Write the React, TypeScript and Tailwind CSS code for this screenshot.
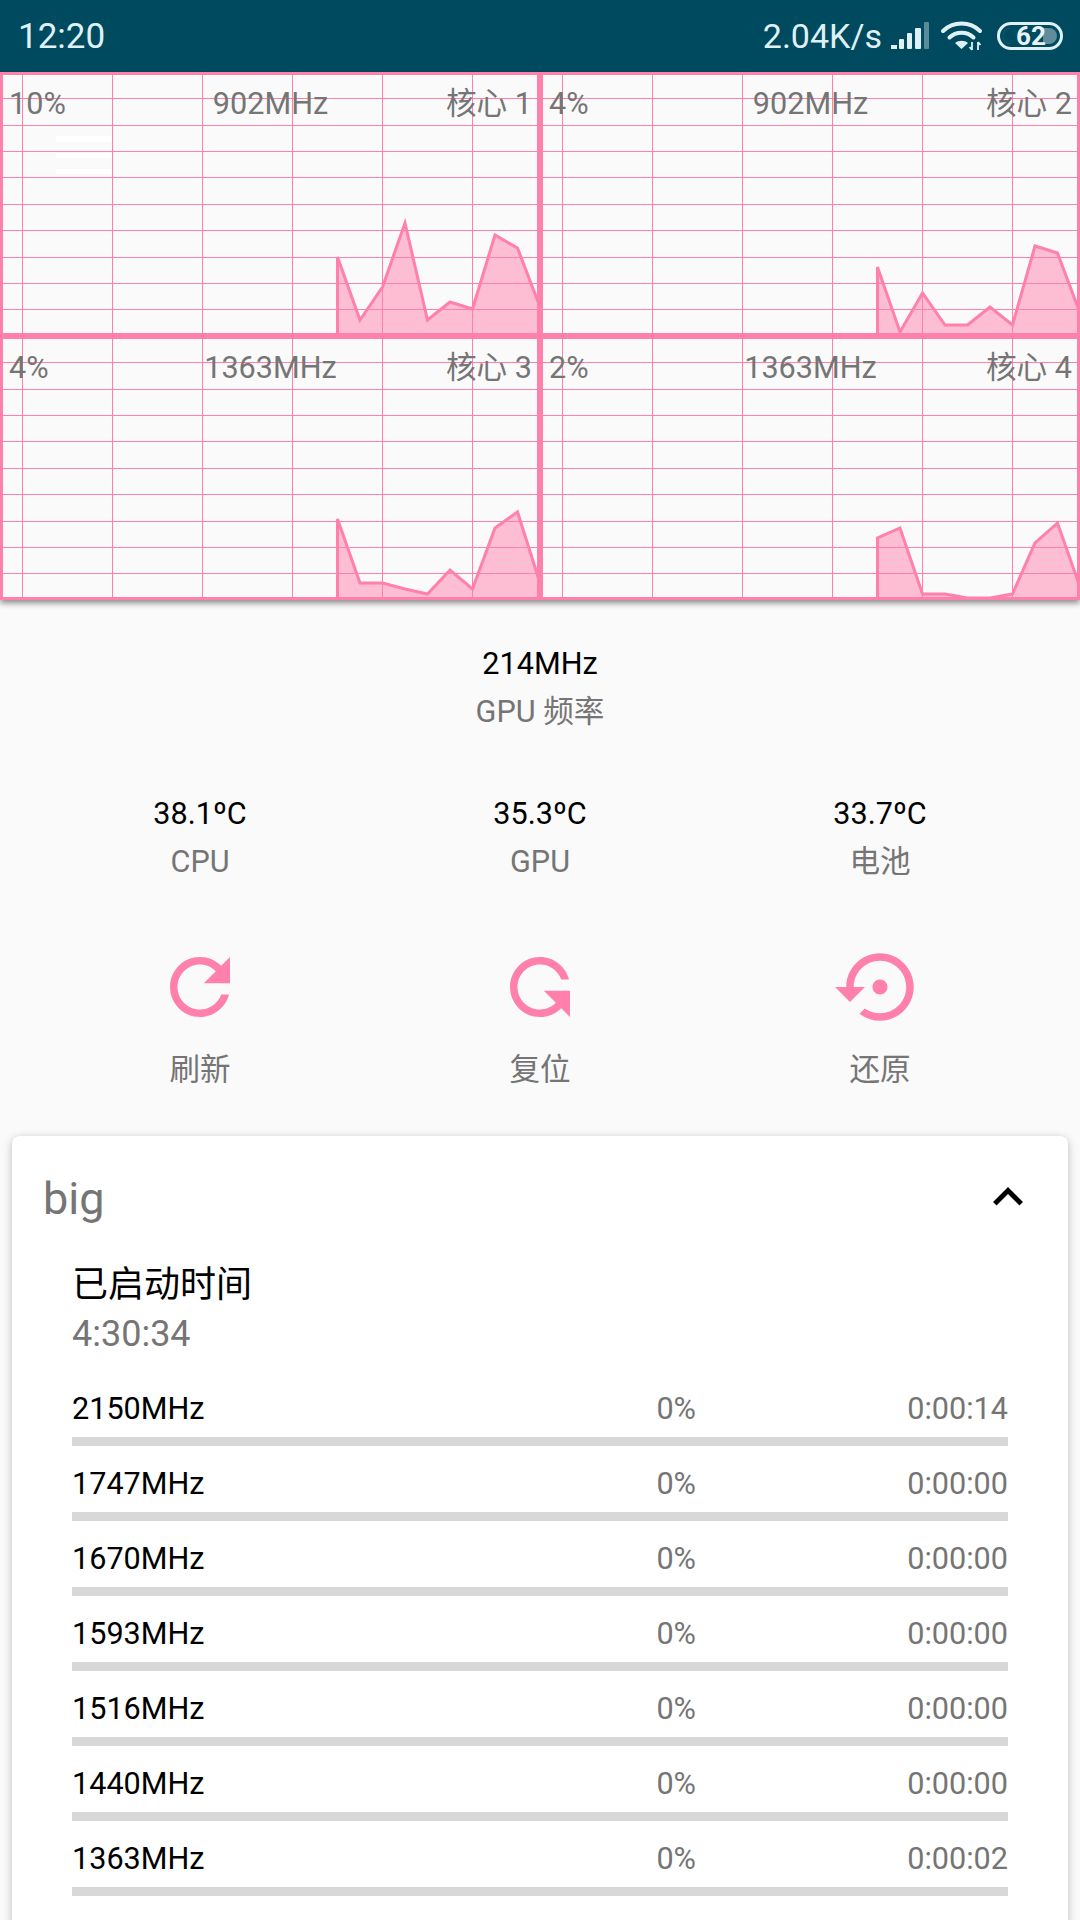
import { Fragment } from 'react';

const PINK = '#ff80ab';

// grid lines are the same in every core panel
const vLines = [22.5, 112.5, 202.5, 292.5, 382.5, 472.5];
const hLines = [26, 53, 79, 105, 132, 158, 185, 211, 237];

// load history, y values in panel coordinates (panel is 540x264)
const cores = [
  {
    load: '10%',
    freq: '902MHz',
    name: '核心 1',
    points: [185, 248, 215, 151, 248, 230, 237, 163, 176, 235],
  },
  {
    load: '4%',
    freq: '902MHz',
    name: '核心 2',
    points: [195, 260, 221, 253, 253, 235, 253, 174, 181, 241],
  },
  {
    load: '4%',
    freq: '1363MHz',
    name: '核心 3',
    points: [183, 247, 247, 253, 258, 234, 253, 192, 176, 247],
  },
  {
    load: '2%',
    freq: '1363MHz',
    name: '核心 4',
    points: [202, 192, 258, 258, 262, 262, 258, 207, 187, 251],
  },
];

const freqRows = [
  ['2150MHz', '0%', '0:00:14'],
  ['1747MHz', '0%', '0:00:00'],
  ['1670MHz', '0%', '0:00:00'],
  ['1593MHz', '0%', '0:00:00'],
  ['1516MHz', '0%', '0:00:00'],
  ['1440MHz', '0%', '0:00:00'],
  ['1363MHz', '0%', '0:00:02'],
];

const temps = [
  ['38.1ºC', 'CPU'],
  ['35.3ºC', 'GPU'],
  ['33.7ºC', '电池'],
];

const REFRESH =
  'M17.65 6.35C16.2 4.9 14.21 4 12 4c-4.42 0-7.99 3.58-7.99 8s3.57 8 7.99 8c3.73 0 6.84-2.55 7.73-6h-2.08c-.82 2.33-3.04 4-5.65 4-3.31 0-6-2.69-6-6s2.69-6 6-6c1.66 0 3.14.69 4.22 1.78L13 11h7V4l-2.35 2.35z';
const RESTORE =
  'M14 12c0-1.1-.9-2-2-2s-2 .9-2 2 .9 2 2 2 2-.9 2-2zm-2-9c-4.97 0-9 4.03-9 9H0l4 4 4-4H5c0-3.87 3.13-7 7-7s7 3.13 7 7-3.13 7-7 7c-1.51 0-2.91-.49-4.06-1.3l-1.42 1.44C8.04 20.3 9.94 21 12 21c4.97 0 9-4.03 9-9s-4.03-9-9-9z';

function StatusIcons() {
  return (
    <div className="flex items-center">
      <svg width="40" height="28" viewBox="0 0 40 28" className="ml-[8px]">
        <rect x="1" y="23" width="6" height="4" fill="#dff1f5" />
        <rect x="9" y="17" width="5" height="10" rx="1" fill="#dff1f5" />
        <rect x="17" y="11" width="5" height="16" rx="1" fill="#dff1f5" />
        <rect x="25" y="6" width="6" height="21" rx="1" fill="#dff1f5" />
        <rect x="34" y="0" width="5" height="27" rx="1" fill="#dff1f5" opacity="0.4" />
      </svg>
      <svg width="44" height="30" viewBox="0 0 44 30" className="ml-[10px]">
        <path d="M3 10C13 0 30 0 40 10" stroke="#dff1f5" strokeWidth="4" fill="none" strokeLinecap="round" />
        <path d="M9.500 16.500C16 10 27 10 33.500 16.500" stroke="#dff1f5" strokeWidth="4" fill="none" strokeLinecap="round" />
        <path d="M15 22C18.500 19 24.500 19 28 22L21.500 28z" fill="#dff1f5" />
        <path d="M32 21v8M32 29l-2.500-3M38 29v-8M38 21l2.500 3" stroke="#dff1f5" strokeWidth="1.800" fill="none" />
      </svg>
      <div className="relative ml-[13px] flex h-[28px] w-[66px] items-center rounded-full border-[3px] border-[#dff1f5]">
        <div className="absolute inset-y-[3px] left-[3px] right-[3px] rounded-full bg-[#5f8d9c]" />
        <div className="absolute inset-y-[3px] left-[3px] w-[40px] rounded-l-full bg-[#004a5f]" />
        <span className="relative ml-[16px] text-[26px] leading-none font-bold text-[#e6f4f7]">62</span>
      </div>
    </div>
  );
}

function CorePanel({ load, freq, name, points }: { load: string; freq: string; name: string; points: number[] }) {
  const coords = points.map((y, i) => `${337.5 + i * 22.5},${y}`).join(' ');
  return (
    <div className="relative h-[264px] w-[540px]">
      <svg width="540" height="264" viewBox="0 0 540 264" className="block">
        {hLines.map((y) => (
          <line key={y} x1="0" x2="540" y1={y + 0.5} y2={y + 0.5} stroke={PINK} strokeWidth="1" />
        ))}
        {vLines.map((x) => (
          <line key={x} x1={x} x2={x} y1="0" y2="264" stroke={PINK} strokeWidth="1" />
        ))}
        <polygon points={`337.5,264 ${coords} 540,264`} fill={PINK} fillOpacity="0.5" />
        <polyline points={`337.5,264 ${coords} 540,264`} fill="none" stroke={PINK} strokeWidth="3" />
        <rect x="0" y="0" width="540" height="264" fill="none" stroke={PINK} strokeWidth="6" />
      </svg>
      <div className="absolute inset-x-0 top-[12px] grid grid-cols-3 pr-[8px] pl-[9px] text-[30.6px] leading-[40px] text-[#757575]">
        <span>{load}</span>
        <span className="text-center">{freq}</span>
        <span className="text-right">{name}</span>
      </div>
    </div>
  );
}

function Stat({ value, label }: { value: string; label: string }) {
  return (
    <div className="flex flex-col items-center gap-[8px] text-[30.6px] leading-[40px]">
      <span className="text-black">{value}</span>
      <span className="text-[#757575]">{label}</span>
    </div>
  );
}

function Action({ path, label, flip }: { path: string; label: string; flip?: boolean }) {
  return (
    <div className="flex flex-col items-center gap-[18px]">
      <svg width="90" height="90" viewBox="0 0 24 24" fill={PINK} className={flip ? '-scale-y-100' : ''}>
        <path d={path} />
      </svg>
      <span className="text-[30.6px] leading-[40px] text-[#757575]">{label}</span>
    </div>
  );
}

export default function App() {
  return (
    <div className="h-[1920px] w-[1080px] overflow-hidden bg-[#fafafa] font-['Roboto','Noto_Sans_CJK_SC',sans-serif]">
      {/* status bar */}
      <div className="flex h-[72px] items-center justify-between bg-[#004a5f] pr-[17px] pl-[18px] text-[#dff1f5]">
        <span className="text-[35px] leading-none">12:20</span>
        <div className="flex items-center">
          <span className="text-[34px] leading-none">2.04K/s</span>
          <StatusIcons />
        </div>
      </div>

      {/* per-core charts */}
      <div className="relative grid h-[528px] grid-cols-2 bg-[#fafafa] shadow-[0_3px_6px_rgba(0,0,0,0.45)]">
        {cores.map((core) => (
          <Fragment key={core.name}>
            <CorePanel {...core} />
          </Fragment>
        ))}
        <div className="absolute top-[64px] left-[56px] flex w-[56px] flex-col gap-[11px]">
          <div className="h-[6px] bg-white" />
          <div className="h-[5px] bg-white" />
          <div className="h-[5px] bg-white" />
        </div>
      </div>

      <div className="pt-[44px]">
        <Stat value="214MHz" label="GPU 频率" />
      </div>

      <div className="mt-[62px] grid grid-cols-3 px-[30px]">
        {temps.map(([value, label]) => (
          <Stat key={label} value={value} label={label} />
        ))}
      </div>

      <div className="mt-[60px] grid grid-cols-3 px-[30px]">
        <Action path={REFRESH} label="刷新" />
        <Action path={REFRESH} label="复位" flip />
        <Action path={RESTORE} label="还原" />
      </div>

      {/* big cluster card */}
      <div className="mx-[12px] mt-[46px] rounded-[8px] bg-white pt-[33px] pb-[60px] shadow-[0_2px_8px_rgba(0,0,0,0.25)]">
        <div className="relative flex h-[60px] items-center pl-[31px]">
          <span className="text-[45px] leading-[60px] text-[#757575]">big</span>
          <svg width="60" height="60" viewBox="0 0 24 24" fill="#000" className="absolute top-[-2px] right-[30px]">
            <path d="M12 8l-6 6 1.41 1.41L12 10.83l4.59 4.58L18 14z" />
          </svg>
        </div>
        <div className="mt-[31px] px-[60px]">
          <div className="text-[36px] leading-[50px] text-black">已启动时间</div>
          <div className="text-[36px] leading-[49px] text-[#757575]">4:30:34</div>
          <div className="mt-[30px]">
            {freqRows.map(([freq, pct, time]) => (
              <div key={freq} className="mb-[18px]">
                <div className="grid grid-cols-3 text-[30.6px] leading-[40px]">
                  <span className="text-black">{freq}</span>
                  <span className="text-right text-[#757575]">{pct}</span>
                  <span className="text-right text-[#757575]">{time}</span>
                </div>
                <div className="mt-[8px] h-[9px] bg-[#d8d8d8]" />
              </div>
            ))}
          </div>
        </div>
      </div>
    </div>
  );
}
